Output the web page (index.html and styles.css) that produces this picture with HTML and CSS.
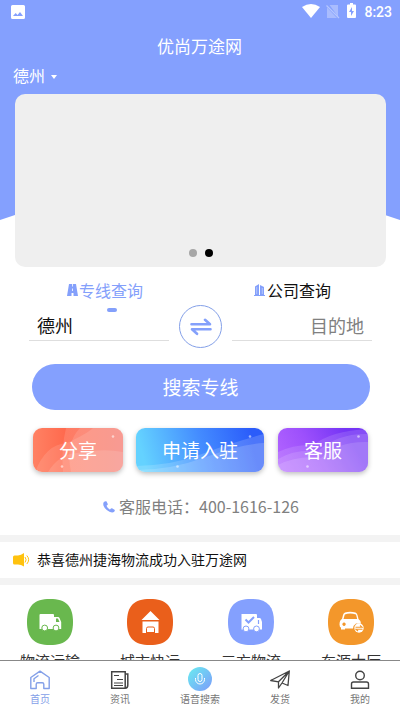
FILE: index.html
```html
<!DOCTYPE html>
<html lang="zh-CN">
<head>
<meta charset="utf-8">
<title>优尚万途网</title>
<link rel="stylesheet" href="styles.css">
</head>
<body>
<div class="app">
  <main class="content">
    <header class="hero">
      <div class="status">
        <svg class="status-pic" width="14" height="14" viewBox="0 0 14 14"><path fill="#fff" fill-rule="evenodd" d="M1.500 0h11Q14 0 14 1.500v11Q14 14 12.500 14h-11Q0 14 0 12.500v-11Q0 0 1.500 0zM2 11h10L9 7 6.500 10 4.700 8z"/></svg>
        <div class="status-right">
          <svg width="18" height="14" viewBox="0 0 18 14"><path fill="#fff" d="M0 3Q9-3 18 3L9 14z"/></svg>
          <svg width="14" height="15" viewBox="0 0 14 15"><path fill="#fff" opacity=".3" d="M3.500 1H12v11.500zM1 3.500 11 14H1z"/><path stroke="#fff" opacity=".4" stroke-width="1.200" d="M.5 1.500 13 14"/></svg>
          <svg class="battery" width="9" height="15" viewBox="0 0 9 15"><path fill="#fff" fill-rule="evenodd" d="M3 0h3v1.500h2q1 0 1 1V14q0 1-1 1H1q-1 0-1-1V2.500q0-1 1-1h2zM5 4 2 9h2v4l3-5H5z"/></svg>
          <span class="clock">8:23</span>
        </div>
      </div>
      <h1 class="title">优尚万途网</h1>
      <div class="city">德州<i class="caret"></i></div>
      <div class="banner"><i class="dot"></i><i class="dot dot-on"></i></div>
    </header>

    <div class="tabs">
      <div class="tab tab-on">
        <svg width="11" height="12" viewBox="0 0 11 12"><path fill="#84a0fb" d="M2 0h7l2 12H6.500V9h-2v3H0z"/><path stroke="#fff" stroke-width=".8" d="M5.500 0v2.500M5.500 4.500V7"/></svg><span>专线查询</span>
      </div>
      <div class="tab">
        <svg width="11" height="12" viewBox="0 0 11 12"><path fill="#84a0fb" d="M1 2.500 5 0v12H1zM6 1l4 2v9H6zM0 11h11v1H0z"/><path stroke="#fff" stroke-width=".4" d="M2.700 3v7M8.300 4v6"/></svg><span>公司查询</span>
      </div>
    </div>

    <div class="route">
      <div class="field">德州</div>
      <div class="swap"><svg width="22" height="18" viewBox="0 0 22 18"><path fill="none" stroke="#84a0fb" stroke-width="2.600" stroke-linecap="round" stroke-linejoin="round" d="M1.500 6.300h18.500l-5-4.500M20.500 11.300H2l5 4.500"/></svg></div>
      <div class="field field-to">目的地</div>
    </div>

    <div class="search">搜索专线</div>

    <div class="actions">
      <div class="action share">
        <svg class="waves" viewBox="0 0 90 44" preserveAspectRatio="none"><g fill="#fff" fill-opacity=".12"><path d="M30 44Q28 20 33 0h57v44z"/><path d="M38 44Q32 15 47 0h43v44z"/><path d="M2 44Q13 16 34 15 55 5 60 0h30v44z"/><path d="M15 44Q26 26 44 25 70 20 90 24v20z"/></g><circle cx="80" cy="8.500" r="1.300" fill="#fff" fill-opacity=".55"/><circle cx="29" cy="38.500" r="1.300" fill="#fff" fill-opacity=".55"/></svg>
        <span>分享</span>
      </div>
      <div class="action join">
        <svg class="waves" viewBox="0 0 128 44" preserveAspectRatio="none"><g fill="#fff" fill-opacity=".16"><path d="M0 38Q38 37 66 26T128 6v38H0z"/><path d="M0 42Q35 42 70 29T128 15v29H0z"/></g><circle cx="114" cy="8.500" r="1.300" fill="#fff" fill-opacity=".55"/><circle cx="41.500" cy="38.500" r="1.300" fill="#fff" fill-opacity=".55"/></svg>
        <span>申请入驻</span>
      </div>
      <div class="action service">
        <svg class="waves" viewBox="0 0 90 44" preserveAspectRatio="none"><g fill="#fff" fill-opacity=".13"><path d="M0 24Q16 16 36 17 52 3 90 1v43H0z"/><path d="M0 31Q16 21 40 23 60 5 90 6v38H0z"/><path d="M0 37Q20 27 43 30 60 13 90 14v30H0z"/></g><circle cx="80.500" cy="8.500" r="1.300" fill="#fff" fill-opacity=".55"/><circle cx="29.500" cy="38.500" r="1.300" fill="#fff" fill-opacity=".55"/></svg>
        <span>客服</span>
      </div>
    </div>

    <div class="phone">
      <svg width="12" height="12" viewBox="0 0 12 12"><path fill="#84a0fb" d="M.5 1.500Q2-.3 3.400.3L4.800 3q.2.800-1.300 1.800Q4.500 7.500 7 8.600q1.200-1.700 2-1.400l2.500 1.500q.8.600-.3 2.100-1.500 1.600-4.700 0Q2 8.500.5 4.700 0 2.800.5 1.500z"/></svg><span>客服电话：400-1616-126</span>
    </div>

    <div class="notice">
      <svg width="17" height="14" viewBox="0 0 17 14"><path fill="#ffc20e" d="M1.500 2.500H5Q8 2 11 0v13.500Q8 11.500 5 11.500H1.500Q0 11.500 0 10V4q0-1.500 1.500-1.500z"/><path fill="none" stroke="#ffc20e" d="M12 4q2.200 2.800 0 5.500M13.800 2.500q3.700 4.200 0 8.500"/></svg>
      <span>恭喜德州捷海物流成功入驻万途网</span>
    </div>

    <div class="grid">
      <div class="cell">
        <svg width="46" height="46" viewBox="0 0 46 46"><path fill="#69b84e" d="M23 0C39 0 46 7 46 23S39 46 23 46 0 39 0 23 7 0 23 0z"/><path fill="#fff" d="M13.500 15H26q1 0 1 1v2h4q1 0 1.500 1l1.700 4v7H12.500V16q0-1 1-1z"/><path fill="#69b84e" d="M29 19.500h2l1.500 3.500H29z"/><g fill="#fff" stroke="#69b84e"><circle cx="17.700" cy="29" r="2.900"/><circle cx="29" cy="29" r="2.900"/></g></svg>
        <span>物流运输</span>
      </div>
      <div class="cell">
        <svg width="46" height="46" viewBox="0 0 46 46"><path fill="#ea5f1b" d="M23 0C39 0 46 7 46 23S39 46 23 46 0 39 0 23 7 0 23 0z"/><path fill="#fff" d="m23.500 12 9 9h-18zM15.500 22.500h16V34h-16z"/><path fill="none" stroke="#ea5f1b" d="M19.500 34v-4.500q0-1.500 1.500-1.500h5q1.500 0 1.500 1.500V34M19.500 33.500h8"/></svg>
        <span>城市快运</span>
      </div>
      <div class="cell">
        <svg width="46" height="46" viewBox="0 0 46 46"><path fill="#84a0fe" d="M23 0C39 0 46 7 46 23S39 46 23 46 0 39 0 23 7 0 23 0z"/><path fill="#fff" d="M13.500 15H28q1 0 1 1v3h2.500q1 0 1.500 1l1 3v7.500H13.500z"/><path fill="none" stroke="#84a0fe" stroke-width="2" d="m17.500 20.500 3 3 5.500-5.500"/><path fill="none" stroke="#84a0fe" stroke-width="1.200" d="M30.500 21v4"/><g fill="#fff" stroke="#84a0fe"><circle cx="18" cy="29.900" r="2.900"/><circle cx="28.500" cy="29.900" r="2.900"/></g></svg>
        <span>三方物流</span>
      </div>
      <div class="cell">
        <svg width="46" height="46" viewBox="0 0 46 46"><path fill="#f3972b" d="M23 0C39 0 46 7 46 23S39 46 23 46 0 39 0 23 7 0 23 0z"/><path fill="#fff" fill-rule="evenodd" d="M17 13.500q5-1.500 10.500 0 1.500.5 2 2.500l1 4q2.500 1.500 2.500 4.500h-5q-3 2-3 5h-8v1h-4v-2q-1.500-.5-1.500-3 0-4.500 2.500-5.500l1-4q.4-2 2-2.500zM15.500 20h13.700l-1.200-4.500Q22 13.500 16.800 15.500zM16 23.500a1.700 1.700 0 1 0 .1 0z"/><circle cx="31" cy="29" r="4.700" fill="#fff"/><path fill="none" stroke="#f3972b" stroke-width="1.100" d="M27.500 28.200h6.500l-2-1.700M34.500 30.300H28l2 1.700"/></svg>
        <span>车源大厅</span>
      </div>
    </div>
  </main>

  <nav class="tabbar">
    <div class="nav nav-on">
      <svg width="20" height="20" viewBox="0 0 20 20"><path fill="none" stroke="#84a0e8" stroke-width="1.400" stroke-linejoin="round" d="M.8 7.500 10 1.200l9.200 6.300V18.500h-5.400v-4.300q0-1.500-1.500-1.500H7.700q-1.500 0-1.500 1.500v4.300H.8zM4 12V8.700L8.500 5.500"/></svg>
      <span>首页</span>
    </div>
    <div class="nav">
      <svg width="20" height="20" viewBox="0 0 20 20"><path fill="none" stroke="#444" stroke-width="1.500" d="M1.700 1.700h13.500v16.500H1.700zM15.500 4h2.300v11q0 3.200-2.600 3.200"/><path stroke="#444" stroke-width="1.200" d="M4 5.500h5M7 9.500h6M4 13h9M4 15.500h9"/></svg>
      <span>资讯</span>
    </div>
    <div class="nav">
      <svg class="mic" width="24" height="24" viewBox="0 0 24 24"><defs><linearGradient id="mic" x1="0" y1="0" x2="1" y2="1"><stop stop-color="#69edf0"/><stop offset="1" stop-color="#7d9bfa"/></linearGradient></defs><circle cx="12" cy="12" r="12" fill="url(#mic)"/><rect x="10" y="6.500" width="4" height="8" rx="2" fill="none" stroke="#fff"/><path fill="none" stroke="#fff" d="M7.500 11v1.500a4.500 4.500 0 0 0 9 0V11"/></svg>
      <span>语音搜索</span>
    </div>
    <div class="nav">
      <svg width="20" height="20" viewBox="0 0 20 20"><path fill="none" stroke="#444" stroke-width="1.300" stroke-linejoin="round" d="M.7 10.500 19.300 1 18 15.500l-6-2.500L8.500 18V11.800zM8.500 11.800 19.300 1 12 13"/></svg>
      <span>发货</span>
    </div>
    <div class="nav">
      <svg width="20" height="20" viewBox="0 0 20 20"><circle cx="10" cy="5.500" r="4.300" fill="none" stroke="#444" stroke-width="1.400"/><path fill="none" stroke="#444" stroke-width="1.400" d="M1.500 18.300V14q0-2 2-2h13q2 0 2 2v4.300z"/></svg>
      <span>我的</span>
    </div>
  </nav>
</div>
</body>
</html>
```
FILE: styles.css
```css
* { box-sizing: border-box; }
body {
  margin: 0;
  background: #fff;
  color: #111;
  font-family: "Noto Sans CJK SC", sans-serif;
  font-weight: 400;
}
svg { display: block; flex: none; }
.app {
  display: flex;
  flex-direction: column;
  height: 711px;
  overflow: hidden;
}
.content {
  flex: 1;
  min-height: 0;
  overflow: hidden;
}
.hero {
  position: relative;
  isolation: isolate;
  height: 267px;
  color: #fff;
}
.hero::before {
  content: "";
  position: absolute;
  z-index: -1;
  inset: 0 0 47px;
  background: #84a0fe;
  clip-path: polygon(0 0, 100% 0, 100% 100%, 96.25% 215px, 80% 200px, 20% 200px, 3.75% 215px, 0 100%);
}
.status {
  display: flex;
  justify-content: space-between;
  height: 32px;
  padding: 3px 8px 0 11px;
}
.status-pic { margin-top: 2px; }
.status-right {
  display: flex;
  align-items: flex-start;
  height: 20px;
}
.status-right svg { margin: 1px 6px 0 0; }
.status-right .battery { margin: 0 8px 0 1px; }
.clock {
  font: 500 14px/18px Roboto, sans-serif;
}
.title {
  margin: 0;
  height: 30px;
  padding-right: 1px;
  font-size: 17px;
  font-weight: inherit;
  line-height: 27px;
  text-align: center;
}
.city {
  display: flex;
  align-items: center;
  height: 32px;
  padding: 0 0 5px 13px;
  font-size: 16px;
  line-height: 27px;
}
.caret {
  margin: 3px 0 0 6px;
  border: 3.5px solid transparent;
  border-top: 4px solid #fff;
  border-bottom: 0;
}
.banner {
  display: flex;
  justify-content: center;
  align-items: flex-end;
  gap: 8px;
  height: 173px;
  margin: 0 14px 0 15px;
  padding-bottom: 10px;
  border-radius: 10px;
  background: #efefef;
}
.dot {
  width: 8px;
  height: 8px;
  border-radius: 50%;
  background: #a6a6a6;
}
.dot-on { background: #000; }
.tabs {
  display: flex;
  justify-content: space-between;
  height: 38px;
  padding: 11px 69px 0 67px;
  font-size: 16px;
  line-height: 24px;
}
.tab {
  position: relative;
  display: flex;
  height: 24px;
  align-items: center;
  gap: 2px;
}
.tab-on { gap: 1px; color: #84a0fb; }
.tab-on::after {
  content: "";
  position: absolute;
  left: 40px;
  top: 30px;
  width: 10px;
  height: 4px;
  border-radius: 2px;
  background: #84a0fb;
}
.route {
  display: flex;
  justify-content: space-between;
  height: 59px;
  padding: 0 28px 0 29px;
}
.field {
  width: 140px;
  height: 36px;
  padding: 5px 8px 0;
  border-bottom: 1px solid #dedede;
  font-size: 18px;
  line-height: 31px;
}
.field-to { color: #808080; text-align: right; }
.swap {
  display: grid;
  place-items: center;
  width: 43px;
  height: 43px;
  border: 1px solid #84a0e8;
  border-radius: 50%;
}
.search {
  height: 46px;
  margin: 0 30px 0 32px;
  padding-right: 1px;
  border-radius: 23px;
  background: #84a0fe;
  color: #fff;
  font-size: 19px;
  line-height: 45px;
  text-align: center;
}
.actions {
  display: flex;
  gap: 13px;
  margin: 18px 32px 0 33px;
  color: #fff;
  font-size: 19px;
  line-height: 43px;
  text-align: center;
}
.action {
  position: relative;
  width: 90px;
  height: 44px;
  border-radius: 9px;
  box-shadow: 0 2px 5px rgba(0, 0, 0, .25);
}
.action span { position: relative; }
.waves {
  position: absolute;
  inset: 0;
  width: 100%;
  height: 100%;
  border-radius: 9px;
}
.share { background: linear-gradient(90deg, #ff8264, #ff6a4e 35%, #f76d60); }
.join { width: 128px; background: linear-gradient(75deg, #64d2ff 8%, #448cff 52%, #2b5cfa 90%); }
.service { margin-left: auto; background: linear-gradient(60deg, #b568ff, #9d50fc 40%, #7434f5 80%); }
.phone {
  display: flex;
  align-items: center;
  gap: 4px;
  height: 63px;
  padding: 6px 0 0 103px;
  color: #808080;
  font-size: 16px;
}
.phone span { margin-top: -2px; }
.notice {
  display: flex;
  align-items: center;
  gap: 7px;
  height: 50px;
  padding-left: 13px;
  border: solid #f3f3f3;
  border-width: 7px 0;
  font-size: 14px;
}
.notice span { margin-top: -2px; }
.grid {
  display: grid;
  grid-template-columns: 100px 100px 102px 98px;
  padding-top: 14px;
}
.cell {
  display: flex;
  flex-direction: column;
  align-items: center;
  gap: 5px;
  color: #333;
  font-size: 15px;
  line-height: 22px;
}
.tabbar {
  display: flex;
  height: 51px;
  border-top: 1px solid #888;
  background: #fff;
}
.nav {
  display: flex;
  flex: 1;
  flex-direction: column;
  align-items: center;
  padding-top: 9px;
  color: #777;
  font-size: 10px;
  line-height: 16px;
}
.nav svg { margin-bottom: 1px; }
.nav .mic { margin: -3px 0 0; }
.nav-on { color: #84a0e8; }
```
